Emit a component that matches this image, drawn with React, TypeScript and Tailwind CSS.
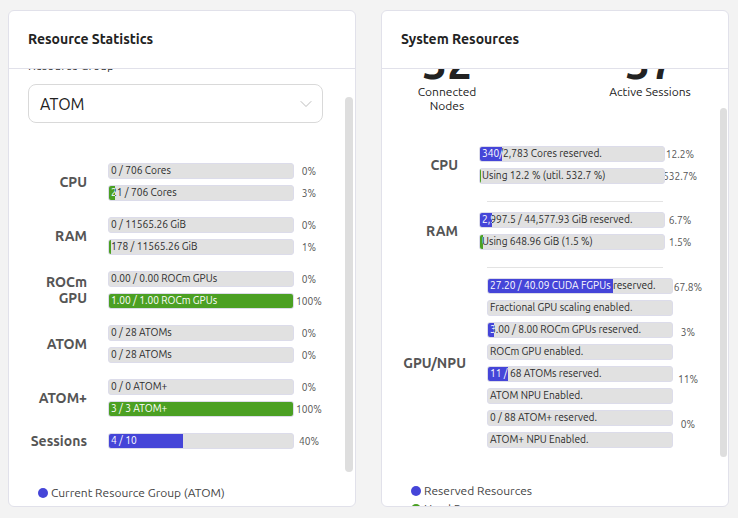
import { ChevronDown } from "lucide-react";

type BarData = { text: string; value: number; color: "blue" | "green"; pct?: string };

const Bar = ({ text, value, color }: BarData) => (
  <div className="relative h-4 w-[186px] shrink-0 overflow-hidden rounded-[3px] border border-[#dcdcea] bg-[#e1e1e1]">
    <div className="absolute inset-0 flex items-center whitespace-nowrap pl-[2px] text-[10.2px] text-[#2b2b2b]">{text}</div>
    <div
      className={`absolute inset-y-0 left-0 overflow-hidden ${color === "blue" ? "bg-[#4545d8]" : "bg-[#4ba023]"}`}
      style={{ width: `${value}%` }}
    >
      <div className="flex h-full w-[184px] items-center whitespace-nowrap pl-[2px] text-[10.2px] text-white">{text}</div>
    </div>
  </div>
);

const Pct = ({ children, className = "" }: { children?: string; className?: string }) => (
  <div className={`flex w-[30px] justify-center whitespace-nowrap text-[10.2px] leading-[14px] text-[#555] ${className}`}>
    {children}
  </div>
);

const leftGroups: { label: string[]; bars: BarData[] }[] = [
  {
    label: ["CPU"],
    bars: [
      { text: "0 / 706 Cores", value: 0, color: "blue", pct: "0%" },
      { text: "21 / 706 Cores", value: 3, color: "green", pct: "3%" },
    ],
  },
  {
    label: ["RAM"],
    bars: [
      { text: "0 / 11565.26 GiB", value: 0, color: "blue", pct: "0%" },
      { text: "178 / 11565.26 GiB", value: 1, color: "green", pct: "1%" },
    ],
  },
  {
    label: ["ROCm", "GPU"],
    bars: [
      { text: "0.00 / 0.00 ROCm GPUs", value: 0, color: "blue", pct: "0%" },
      { text: "1.00 / 1.00 ROCm GPUs", value: 100, color: "green", pct: "100%" },
    ],
  },
  {
    label: ["ATOM"],
    bars: [
      { text: "0 / 28 ATOMs", value: 0, color: "blue", pct: "0%" },
      { text: "0 / 28 ATOMs", value: 0, color: "green", pct: "0%" },
    ],
  },
  {
    label: ["ATOM+"],
    bars: [
      { text: "0 / 0 ATOM+", value: 0, color: "blue", pct: "0%" },
      { text: "3 / 3 ATOM+", value: 100, color: "green", pct: "100%" },
    ],
  },
  {
    label: ["Sessions"],
    bars: [{ text: "4 / 10", value: 40, color: "blue", pct: "40%" }],
  },
];

const gpuPairs: { bars: BarData[]; pct: string; pad: string }[] = [
  {
    bars: [
      { text: "27.20 / 40.09 CUDA FGPUs reserved.", value: 67.8, color: "blue" },
      { text: "Fractional GPU scaling enabled.", value: 0, color: "green" },
    ],
    pct: "67.8%",
    pad: "pt-[2px]",
  },
  {
    bars: [
      { text: "3.00 / 8.00 ROCm GPUs reserved.", value: 3, color: "blue" },
      { text: "ROCm GPU enabled.", value: 0, color: "green" },
    ],
    pct: "3%",
    pad: "pt-[3px]",
  },
  {
    bars: [
      { text: "11 / 68 ATOMs reserved.", value: 11, color: "blue" },
      { text: "ATOM NPU Enabled.", value: 0, color: "green" },
    ],
    pct: "11%",
    pad: "pt-[6px]",
  },
  {
    bars: [
      { text: "0 / 88 ATOM+ reserved.", value: 0, color: "blue" },
      { text: "ATOM+ NPU Enabled.", value: 0, color: "green" },
    ],
    pct: "0%",
    pad: "pt-[7px]",
  },
];

const Legend = ({ items, pad }: { items: { label: string; color: string }[]; pad: string }) => (
  <div className={`shrink-0 pl-[29px] ${pad}`}>
    {items.map((item) => (
      <div key={item.label} className="flex items-center gap-[3px] text-[12px] leading-[18px] text-[#444]">
        <span className={`h-[10px] w-[10px] rounded-full ${item.color}`} />
        {item.label}
      </div>
    ))}
  </div>
);

const Card = ({ title, children }: { title: string; children: React.ReactNode }) => (
  <div className="relative flex h-[497px] w-[348px] flex-col overflow-hidden rounded-md border border-[#e1e1ea] bg-white">
    <div className="flex h-[58px] shrink-0 items-center border-b border-[#e1e1ea] px-[19px] text-[14px] font-bold text-[#222]">
      {title}
    </div>
    {children}
  </div>
);

export default function App() {
  return (
    <div className="flex min-h-screen gap-[25px] bg-[#f3f3f3] pl-2 pt-[10px] font-[Ubuntu,Lato,sans-serif]">
      {/* Resource Statistics */}
      <Card title="Resource Statistics">
        <div className="h-[406px] shrink-0 overflow-hidden px-[19px]">
          <div className="-mt-[11px]">
            <div className="text-[12px] leading-4 text-[#333]">Resource Group</div>
            <div className="mt-[10px] flex h-[39px] w-[295px] items-center justify-between rounded-lg border border-[#d9d9d9] pl-[11px] pr-[6px] text-[16px] text-[#222]">
              ATOM
              <ChevronDown size={20} strokeWidth={1.2} color="#bdbdbd" />
            </div>
            <div className="mt-[40px] flex flex-col gap-[16px]">
              {leftGroups.map((g) => (
                <div key={g.label.join(" ")} className="flex items-center">
                  <div className="w-[59px] text-right text-[14px] font-bold leading-[16px] text-[#555]">
                    {g.label.map((l) => (
                      <div key={l}>{l}</div>
                    ))}
                  </div>
                  <div className="ml-[21px] flex flex-col gap-[6px]">
                    {g.bars.map((b, i) => (
                      <div key={i} className="flex items-center">
                        <Bar {...b} />
                        <Pct>{b.pct}</Pct>
                      </div>
                    ))}
                  </div>
                </div>
              ))}
            </div>
          </div>
        </div>
        <Legend
          pad="pt-[9px]"
          items={[
            { label: "Current Resource Group (ATOM)", color: "bg-[#4545d8]" },
            { label: "User Resource Limit", color: "bg-[#4ba023]" },
          ]}
        />
        <div className="absolute left-[336px] top-[86px] h-[375px] w-[8px] rounded-full bg-[#dedede]" />
      </Card>

      {/* System Resources */}
      <Card title="System Resources">
        <div className="h-[406px] shrink-0 overflow-hidden px-[19px]">
          <div className="-mt-[28px]">
            <div className="flex text-[#222]">
              <div className="ml-[6px] w-[80px] text-center">
                <div className="text-[44px] font-bold leading-none">32</div>
                <div className="text-[12px] leading-[14px]">Connected Nodes</div>
              </div>
              <div className="ml-[113px] w-[100px] text-center">
                <div className="text-[44px] font-bold leading-none">37</div>
                <div className="whitespace-nowrap text-[12px] leading-[14px]">Active Sessions</div>
              </div>
            </div>

            <div className="mt-[33px] flex items-center">
              <div className="w-[57px] text-right text-[14px] font-bold text-[#555]">CPU</div>
              <div className="ml-[21px] flex flex-col gap-[6px]">
                <div className="flex items-center">
                  <Bar text="340/2,783 Cores reserved." value={12.2} color="blue" />
                  <Pct>12.2%</Pct>
                </div>
                <div className="flex items-center">
                  <Bar text="Using 12.2 % (util. 532.7 %)" value={0.5} color="green" />
                  <Pct>532.7%</Pct>
                </div>
              </div>
            </div>
            <div className="ml-[86px] mt-[17px] h-px w-[176px] bg-[#e3e3e3]" />

            <div className="mt-[10px] flex items-center">
              <div className="w-[57px] text-right text-[14px] font-bold text-[#555]">RAM</div>
              <div className="ml-[21px] flex flex-col gap-[6px]">
                <div className="flex items-center">
                  <Bar text="2,997.5 / 44,577.93 GiB reserved." value={6.7} color="blue" />
                  <Pct>6.7%</Pct>
                </div>
                <div className="flex items-center">
                  <Bar text="Using 648.96 GiB (1.5 %)" value={1.5} color="green" />
                  <Pct>1.5%</Pct>
                </div>
              </div>
            </div>
            <div className="ml-[86px] mt-[17px] h-px w-[176px] bg-[#e3e3e3]" />

            <div className="mt-[10px] flex items-center">
              <div className="w-[65px] text-right text-[14px] font-bold text-[#555]">GPU/NPU</div>
              <div className="ml-[21px] flex flex-col gap-[6px]">
                {gpuPairs.map((p) => (
                  <div key={p.pct} className="flex items-start">
                    <div className="flex flex-col gap-[6px]">
                      {p.bars.map((b) => (
                        <Bar key={b.text} {...b} />
                      ))}
                    </div>
                    <Pct className={p.pad}>{p.pct}</Pct>
                  </div>
                ))}
              </div>
            </div>
          </div>
        </div>
        <Legend
          pad="pt-[7px]"
          items={[
            { label: "Reserved Resources", color: "bg-[#4545d8]" },
            { label: "Used Resources", color: "bg-[#4ba023]" },
          ]}
        />
        <div className="absolute left-[338px] top-[97px] h-[349px] w-[7px] rounded-full bg-[#dedede]" />
      </Card>
    </div>
  );
}
